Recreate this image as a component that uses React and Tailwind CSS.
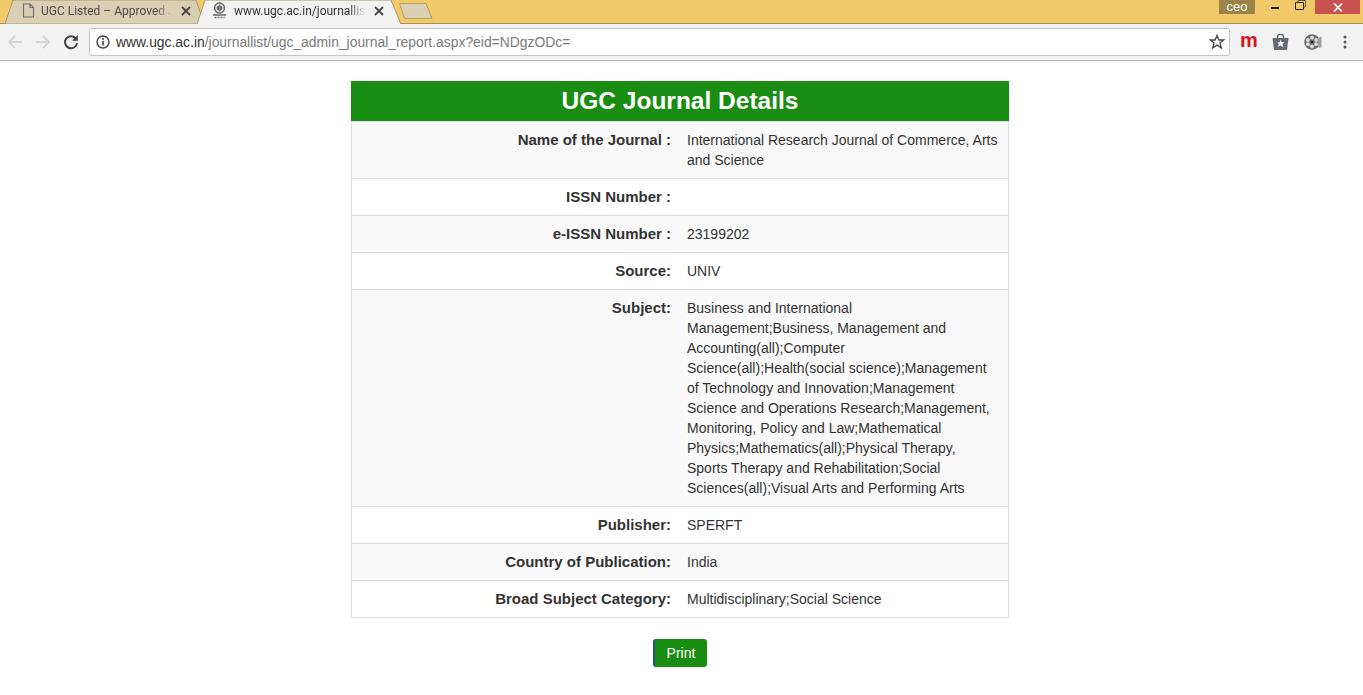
import React from "react";

const rows = [
  ["Name of the Journal :", "International Research Journal of Commerce, Arts and Science"],
  ["ISSN Number :", ""],
  ["e-ISSN Number :", "23199202"],
  ["Source:", "UNIV"],
  ["Subject:", "Business and International Management;Business, Management and Accounting(all);Computer Science(all);Health(social science);Management of Technology and Innovation;Management Science and Operations Research;Management, Monitoring, Policy and Law;Mathematical Physics;Mathematics(all);Physical Therapy, Sports Therapy and Rehabilitation;Social Sciences(all);Visual Arts and Performing Arts"],
  ["Publisher:", "SPERFT"],
  ["Country of Publication:", "India"],
  ["Broad Subject Category:", "Multidisciplinary;Social Science"],
];

function TabX() {
  return (
    <svg width="10" height="10" viewBox="0 0 10 10" className="shrink-0">
      <path d="M1 1L9 9M9 1L1 9" stroke="#444" strokeWidth="1.8" />
    </svg>
  );
}

function Emblem() {
  return (
    <svg width="15" height="18" viewBox="0 0 15 18" className="shrink-0">
      <circle cx="7.5" cy="6" r="5" fill="#e4e4e4" stroke="#666" strokeWidth="1.3" />
      <circle cx="7.5" cy="6" r="2.6" fill="#5c5c5c" />
      <path d="M7.5 1.5V10.5M3 6H12" stroke="#8a8a8a" strokeWidth="0.7" />
      <path d="M1 13h13" stroke="#333" strokeWidth="1.1" />
      <path d="M2.5 15.5h10" stroke="#777" strokeWidth="1.4" strokeDasharray="2 1" />
    </svg>
  );
}

function Tabs() {
  return (
    <div className="h-[24px] bg-[#f2c968] border-b border-[#a88f52] flex items-start relative">
      <div className="relative w-[200px] h-[23px] ml-[4px] flex items-center shrink-0">
        <svg width="200" height="24" viewBox="0 0 200 24" className="absolute left-0 top-0">
          <path d="M1 24L9 0H192L200 24Z" fill="#d9cfb4" stroke="#a8986b" />
        </svg>
        <div className="relative flex items-center w-full pl-[18px] -mt-[2px]">
          <svg width="13" height="15" viewBox="0 0 13 15" className="shrink-0">
            <path d="M1.5 1H8L11.5 4.5V14H1.5Z M8 1V4.5H11.5" fill="none" stroke="#6e6e6e" strokeWidth="1.1" />
          </svg>
          <span className="ml-[6px] w-[131px] text-[12px] text-[#4a4a4a] whitespace-nowrap [mask-image:linear-gradient(to_right,black_88%,transparent)] font-['Roboto',sans-serif]">UGC Listed – Approved J</span>
          <span className="ml-[9px] flex"><TabX /></span>
        </div>
      </div>
      <div className="relative w-[207px] h-[24px] -ml-[7px] flex items-center shrink-0">
        <svg width="207" height="25" viewBox="0 0 207 25" className="absolute left-0 top-0">
          <path d="M0 25L8 0H194L204 25Z" fill="#f2f2f2" />
          <path d="M0 24L8 0H194L204 24" fill="none" stroke="#a8986b" />
        </svg>
        <div className="relative flex items-center w-full pl-[15px] -mt-[3px]">
          <Emblem />
          <span className="ml-[7px] w-[131px] text-[12px] text-[#333] whitespace-nowrap [mask-image:linear-gradient(to_right,black_88%,transparent)] font-['Roboto',sans-serif]">www.ugc.ac.in/journallist</span>
          <span className="ml-[9px] flex"><TabX /></span>
        </div>
      </div>
      <svg width="36" height="20" viewBox="0 0 36 20" className="-ml-[6px] mt-[2px] shrink-0">
        <path d="M1.5 1.5H28L34 16.5H6.5Z" fill="#d9cfb4" stroke="#b89f5e" />
      </svg>
      <div className="ml-auto flex items-start h-[14px] pr-[3px]">
        <div className="w-[36px] h-[14px] bg-[#9a8449] text-white text-[13px] leading-[13px] text-center font-['Liberation_Sans',sans-serif]">ceo</div>
        <div className="w-[27px] h-[14px] ml-[6px] flex items-end justify-center pb-[5px]">
          <div className="w-[8px] h-[2px] bg-[#222]" />
        </div>
        <div className="w-[25px] h-[14px] flex justify-center">
          <svg width="11" height="10" viewBox="0 0 11 10">
            <path d="M0.5 2.5H8.5V9.5H0.5Z" fill="none" stroke="#222" />
            <path d="M3 2.5V0.5H10.5V7H8.5" fill="none" stroke="#555" />
          </svg>
        </div>
        <div className="w-[45px] h-[14px] ml-[2px] bg-[#c9514f] flex items-center justify-center">
          <svg width="10" height="9" viewBox="0 0 10 9">
            <path d="M1 0.5L9 8.5M9 0.5L1 8.5" stroke="#fff" strokeWidth="1.7" />
          </svg>
        </div>
      </div>
    </div>
  );
}

function Toolbar() {
  return (
    <div className="h-[37px] bg-[#f2f2f2] border-b border-[#b8b8b8] flex items-center">
      <svg width="16" height="14" viewBox="0 0 16 14" className="ml-[7px]">
        <path d="M15 7H2M8 1L2 7L8 13" fill="none" stroke="#d4d4d4" strokeWidth="1.8" />
      </svg>
      <svg width="16" height="14" viewBox="0 0 16 14" className="ml-[12px]">
        <path d="M1 7H14M8 1L14 7L8 13" fill="none" stroke="#d4d4d4" strokeWidth="1.8" />
      </svg>
      <svg width="16" height="16" viewBox="0 0 16 16" className="ml-[12px]">
        <path d="M13.2 5.2A6 6 0 1 0 14 9" fill="none" stroke="#444" strokeWidth="2" />
        <path d="M14.8 1V6.8H9Z" fill="#444" />
      </svg>
      <div className="ml-[10px] w-[1141px] h-[28px] bg-white border border-[#c4c4c4] rounded-[3px] flex items-center pl-[6px] pr-[4px]">
        <svg width="14" height="14" viewBox="0 0 14 14" className="shrink-0">
          <circle cx="7" cy="7" r="6" fill="none" stroke="#444" strokeWidth="1.4" />
          <path d="M7 6V10.5" stroke="#444" strokeWidth="1.6" />
          <circle cx="7" cy="4" r="1" fill="#444" />
        </svg>
        <span className="ml-[6px] text-[13.88px] whitespace-nowrap font-['Liberation_Sans',sans-serif] text-[#333]">
          www.ugc.ac.in<span className="text-[#7a7a7a]">/journallist/ugc_admin_journal_report.aspx?eid=NDgzODc=</span>
        </span>
        <svg width="16" height="16" viewBox="0 0 16 16" className="ml-auto">
          <path d="M8 1.5L9.9 6H14.7L10.9 9L12.3 14L8 11.1L3.7 14L5.1 9L1.3 6H6.1Z" fill="none" stroke="#444" strokeWidth="1.3" />
        </svg>
      </div>
      <span className="ml-[10px] w-[18px] text-[#d81414] text-[20px] leading-[20px] font-bold font-['Liberation_Sans',sans-serif] -mt-[4px]">m</span>
      <svg width="17" height="16" viewBox="0 0 17 16" className="ml-[14px]">
        <path d="M5.5 4V3A3 3 0 0 1 11.5 3V4" fill="none" stroke="#666" strokeWidth="1.4" />
        <path d="M0.5 4H16.5L15 16H2Z" fill="#666a75" />
        <path d="M8.5 5.5L9.5 8H12.5L10.5 10L11.5 13.5L8.5 11.5L5.5 13L7 10.5L5.5 8.5H7.5Z" fill="#f2f2f2" />
      </svg>
      <svg width="18" height="16" viewBox="0 0 18 16" className="ml-[15px]">
        <circle cx="8" cy="8" r="7.8" fill="#6f6f6f" />
        <circle cx="8" cy="8" r="1.3" fill="#222" />
        <circle cx="8" cy="3.7" r="1.9" fill="#dedede" />
        <circle cx="8" cy="12.3" r="1.9" fill="#dedede" />
        <circle cx="3.9" cy="6" r="1.9" fill="#dedede" />
        <circle cx="12.1" cy="6" r="1.9" fill="#dedede" />
        <circle cx="3.9" cy="10.2" r="1.9" fill="#dedede" />
        <circle cx="12.1" cy="10.2" r="1.9" fill="#dedede" />
        <path d="M14 4L17.5 2.5V14L14 12.5Z" fill="#a0a0a0" />
      </svg>
      <svg width="4" height="14" viewBox="0 0 4 14" className="ml-[21px]">
        <circle cx="2" cy="2" r="1.5" fill="#555" />
        <circle cx="2" cy="7" r="1.5" fill="#555" />
        <circle cx="2" cy="12" r="1.5" fill="#555" />
      </svg>
    </div>
  );
}

export default function App() {
  return (
    <div className="min-h-[695px] bg-white font-['Liberation_Sans',Arial,sans-serif]">
      <Tabs />
      <Toolbar />
      <div className="w-[658px] ml-[351px] mt-[20px]">
        <h1 className="h-[40px] bg-[#188d12] text-white text-[24.5px] font-bold text-center leading-[40px]">UGC Journal Details</h1>
        <div className="border-x border-b border-[#dddddd]">
          {rows.map(([k, v], i) => (
            <div key={k} className={`grid grid-cols-[327px_329px] border-t border-[#dddddd] ${i % 2 === 0 ? "bg-[#f9f9f9]" : "bg-white"}`}>
              <div className="p-[8px] text-right font-bold text-[15px] leading-[20px] text-[#333]">{k}</div>
              <div className="p-[8px] text-[14px] leading-[20px] text-[#333] min-h-[36px]">{v}</div>
            </div>
          ))}
        </div>
        <div className="flex justify-center mt-[21px]">
          <button className="w-[54px] h-[28px] bg-[#188d12] border-l-2 border-[#1d5a6e] rounded-[3px] text-white text-[14px] leading-[20px]">Print</button>
        </div>
      </div>
    </div>
  );
}
